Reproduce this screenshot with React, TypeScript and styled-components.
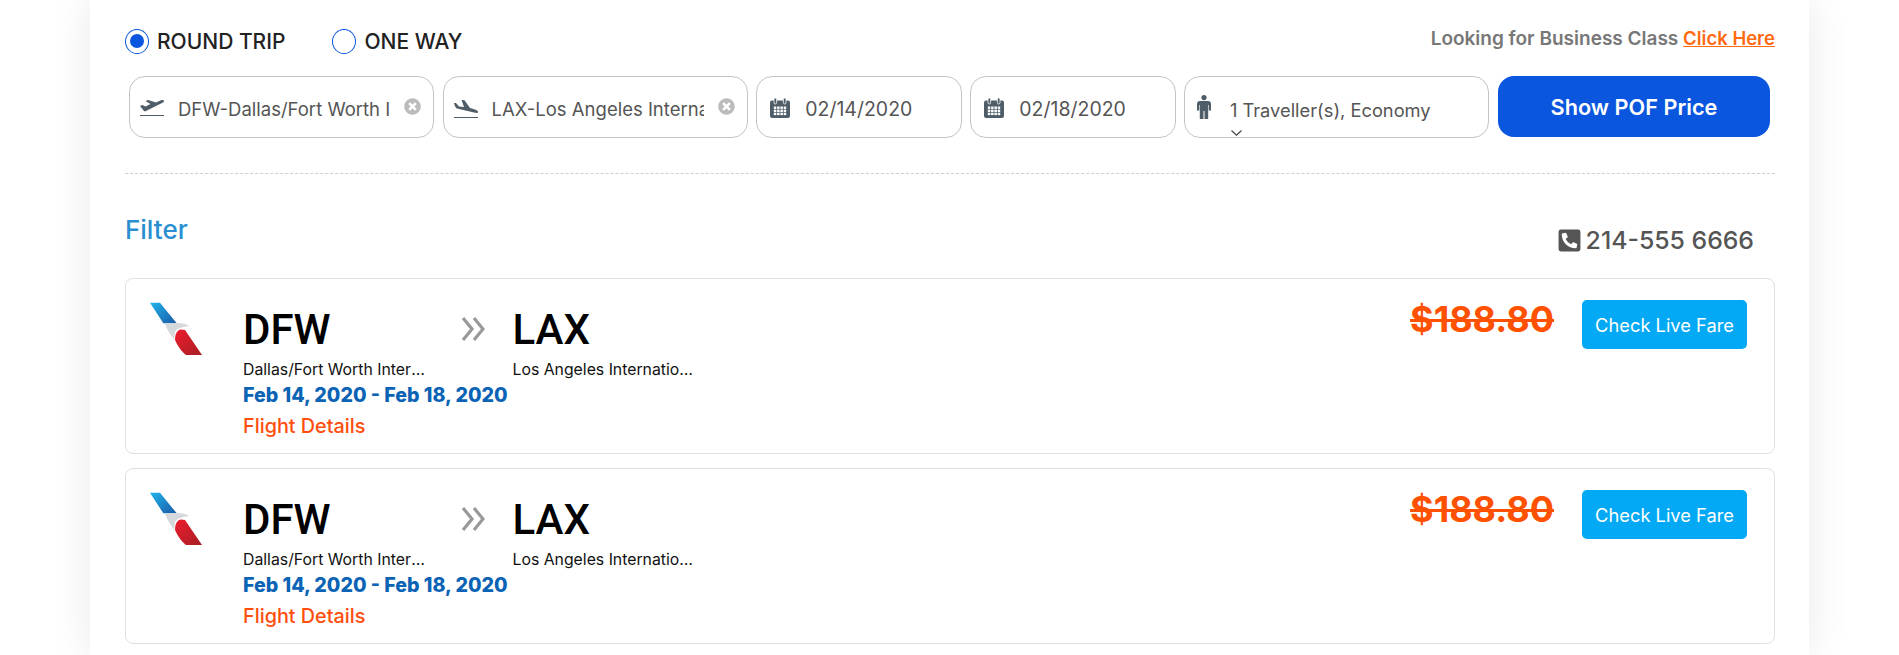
import React from 'react';
import styled, { createGlobalStyle } from 'styled-components';
import { FaPhoneSquareAlt, FaTimesCircle } from 'react-icons/fa';

const GlobalStyle = createGlobalStyle`
  html, body {
    margin: 0;
    height: 655px;
    overflow: hidden;
    background: #fff;
    font-family: Inter, "Liberation Sans", sans-serif;
  }
`;

const Panel = styled.div`
  width: 1719px;
  height: 655px;
  box-sizing: border-box;
  margin-left: 90px;
  padding: 0 34px 0 35px;
  background: #fff;
  box-shadow: 0 0 40px rgba(0, 0, 0, 0.09);
`;

const TopRow = styled.div`
  display: flex;
  align-items: center;
  justify-content: space-between;
  height: 76px;
  padding-top: 6px;
  box-sizing: border-box;
`;

const TripTypes = styled.div`
  display: flex;
  gap: 47px;
`;

const TripType = styled.label`
  display: flex;
  align-items: center;
  gap: 8px;
  font-size: 21px;
  font-weight: 500;
  color: #222;
`;

const Radio = styled.span<{ $checked?: boolean }>`
  width: 24px;
  height: 25px;
  box-sizing: border-box;
  border: 1px solid #0a56de;
  border-radius: 50%;
  display: flex;
  align-items: center;
  justify-content: center;

  &::after {
    content: '';
    display: ${(p) => (p.$checked ? 'block' : 'none')};
    width: 14px;
    height: 14px;
    border-radius: 50%;
    background: #0a56de;
  }
`;

const BusinessNote = styled.div`
  font-size: 19px;
  font-weight: 600;
  color: #777;
  margin-top: -6px;

  a {
    color: #ff6a13;
    text-decoration: underline;
    font-size: 18.5px;
  }
`;

const SearchBar = styled.div`
  display: flex;
  gap: 8.6px;
  margin-left: 4px;
  padding-bottom: 35px;
`;

const Divider = styled.div`
  border-bottom: 1px dashed #cfcfcf;
`;

const Field = styled.div<{ $width: number }>`
  width: ${(p) => p.$width}px;
  height: 62px;
  box-sizing: border-box;
  border: 1px solid #c4c4c4;
  border-radius: 16px;
  background: #fff;
  display: flex;
  align-items: flex-start;
  padding: 20px 0 0 10px;
  color: #4e5d68;
  flex: none;
`;

const FieldText = styled.div<{ $width: number; $gap: number; $size?: number }>`
  width: ${(p) => p.$width}px;
  margin-left: ${(p) => p.$gap}px;
  overflow: hidden;
  white-space: nowrap;
  font-size: ${(p) => p.$size ?? 18.5}px;
  line-height: 24px;
  color: #555;
`;

const Clear = styled.span`
  margin-left: 14px;
  color: #bbb;
  display: flex;
  font-size: 17px;
  margin-top: 1px;
`;

const PlaneIcon = styled.svg`
  width: 24px;
  height: 18px;
  flex: none;
  margin-top: 3px;
  fill: currentColor;
`;

const CalendarIcon = styled.svg`
  width: 20px;
  height: 20px;
  flex: none;
  margin: 1px 0 0 3px;
`;

const PersonIcon = styled.svg`
  width: 14px;
  height: 24px;
  flex: none;
  margin: -2px 0 0 1.5px;
  fill: currentColor;
`;

const TravellerField = styled(Field)`
  overflow: hidden;
`;

const TravellerText = styled.div`
  margin-left: 19px;
  margin-top: 1px;
  font-size: 18.3px;
  line-height: 24px;
  color: #555;
  white-space: nowrap;
`;

const Caret = styled.svg`
  display: block;
  width: 11px;
  height: 6px;
  margin: 8px 0 0 1px;
  fill: none;
  stroke: #444;
  stroke-width: 1.2;
`;

const SearchButton = styled.button`
  width: 272px;
  height: 61px;
  flex: none;
  border: 0;
  border-radius: 16px;
  background: #0a56de;
  color: #fff;
  font-family: inherit;
  font-size: 21.7px;
  font-weight: 600;
`;

const FilterRow = styled.div`
  display: flex;
  justify-content: space-between;
  height: 104px;
  box-sizing: border-box;
  padding: 41px 21px 0 0;
`;

const FilterTitle = styled.div`
  font-size: 26px;
  font-weight: 500;
  line-height: 30px;
  color: #2a8fd0;
`;

const Phone = styled.div`
  display: flex;
  align-items: center;
  gap: 4px;
  margin-top: 13px;
  height: 24px;
  font-size: 24.8px;
  font-weight: 500;
  color: #555;
`;

const FlightCard = styled.div`
  height: 176px;
  box-sizing: border-box;
  margin-bottom: 14px;
  border: 1px solid #e0e0e0;
  border-radius: 8px;
  display: flex;
  padding: 21px 27px 0 24px;
`;

const Logo = styled.svg`
  width: 54px;
  height: 54px;
  flex: none;
  margin: 2px 39px 0 0;
`;

const Route = styled.div`
  display: flex;
  flex-direction: column;
`;

const Stops = styled.div`
  display: flex;
`;

const Stop = styled.div<{ $width: number }>`
  width: ${(p) => p.$width}px;
`;

const Code = styled.div`
  font-family: Roboto, sans-serif;
  font-size: 42px;
  font-weight: 500;
  line-height: 48px;
  margin-top: 6px;
  color: #000;
`;

const AirportName = styled.div`
  width: 183px;
  margin-top: 5px;
  font-size: 15.8px;
  line-height: 22px;
  color: #111;
  white-space: nowrap;
  overflow: hidden;
  text-overflow: ellipsis;
`;

const Arrow = styled.svg`
  width: 24px;
  height: 24px;
  flex: none;
  margin: 17px 28px 0 0;
  color: #999;
`;

const Dates = styled.div`
  margin-top: 2px;
  font-size: 19.6px;
  font-weight: 800;
  line-height: 24px;
  color: #0a63b5;
`;

const DetailsLink = styled.a`
  margin-top: 7px;
  font-size: 19.8px;
  font-weight: 500;
  line-height: 24px;
  color: #ff4e0d;
`;

const Fare = styled.div`
  margin-left: auto;
  display: flex;
  gap: 28px;
`;

const Price = styled.div`
  font-size: 36px;
  font-weight: 700;
  line-height: 40px;
  color: #ff5100;
  text-decoration: line-through;
  margin-top: -1px;
`;

const LiveFareButton = styled.button`
  width: 165px;
  height: 49px;
  border: 0;
  border-radius: 5px;
  background: #03a9f4;
  color: #fff;
  font-family: inherit;
  font-size: 18.3px;
`;

const flights = [1, 2];
const calendarCols = [3.8, 7.1, 10.4, 13.7];
const calendarRows = [8.5, 11.6, 14.7];

function TailLogo() {
  return (
    <Logo viewBox="0 0 54 54">
      <defs>
        <linearGradient id="tailBlue" x1="0" y1="0" x2="1" y2="1">
          <stop offset="0" stopColor="#1fb4ea" />
          <stop offset="1" stopColor="#1c5aa8" />
        </linearGradient>
        <linearGradient id="tailRed" x1="0" y1="0" x2="1" y2="1">
          <stop offset="0" stopColor="#ee1c2e" />
          <stop offset="1" stopColor="#a81e24" />
        </linearGradient>
      </defs>
      <path d="M0 0.7H10L26.7 21.3H13.3Z" fill="url(#tailBlue)" />
      <path d="M15 22C24 21 33 20 39 24C33 25 27 26 25 30L24 38C21 33 17 28 15 22Z" fill="#d6d9dc" />
      <path d="M25 38C25 32 27 28 31 27.5L35 28L52 53H36C33 51 28 45 25 38Z" fill="url(#tailRed)" />
    </Logo>
  );
}

function DoubleArrow() {
  return (
    <Arrow viewBox="0 0 24 24" fill="none" stroke="currentColor" strokeWidth="3.2">
      <polyline points="2,1 11,12 2,23" />
      <polyline points="13,1 22,12 13,23" />
    </Arrow>
  );
}

function Takeoff() {
  return (
    <PlaneIcon viewBox="0 0 24 18">
      <path d="M0 6L2.5 5L5.5 6.5L10.5 4L5.5 1L8 0L16 2.5L20.5 0.5C22.1 -0.2 23.5 -0.1 24 0.7C24.3 1.5 23.5 2.3 22 3.1L6 11C5.2 11.3 4.5 11.3 4 11Z" />
      <rect x="0" y="15" width="24" height="1" />
    </PlaneIcon>
  );
}

function Landing() {
  return (
    <PlaneIcon viewBox="0 0 24 18">
      <path d="M0 3L2 3L5 6.5L10 7L7.5 0L10.5 0.3L16 8L21 9.5C23.5 10.3 24.5 11.5 24 12.5C23.5 13.2 22 13 20 12.5L3 8.5C2 8 1 7 0 3Z" />
      <rect x="0" y="17" width="24" height="1" />
    </PlaneIcon>
  );
}

function Calendar() {
  return (
    <CalendarIcon viewBox="0 0 20 20">
      <rect x="0" y="2.5" width="20" height="17.5" rx="2" fill="currentColor" />
      <rect x="4" y="0" width="2.6" height="6" rx="1.3" fill="currentColor" stroke="#fff" strokeWidth="0.8" />
      <rect x="13.4" y="0" width="2.6" height="6" rx="1.3" fill="currentColor" stroke="#fff" strokeWidth="0.8" />
      {calendarRows.map((y) =>
        calendarCols.map((x) => <rect key={`${x}-${y}`} x={x} y={y} width="2.5" height="2.4" fill="#fff" />)
      )}
    </CalendarIcon>
  );
}

function Person() {
  return (
    <PersonIcon viewBox="0 0 14 24">
      <circle cx="7" cy="2.6" r="2.6" />
      <path d="M3 6H11A3 3 0 0 1 14 9V15.5H11.8V10H11.2V24H7.5V16H6.5V24H2.8V10H2.2V15.5H0V9A3 3 0 0 1 3 6Z" />
    </PersonIcon>
  );
}

export default function App() {
  return (
    <>
      <GlobalStyle />
      <Panel>
        <TopRow>
          <TripTypes>
            <TripType>
              <Radio $checked />
              ROUND TRIP
            </TripType>
            <TripType>
              <Radio />
              ONE WAY
            </TripType>
          </TripTypes>
          <BusinessNote>
            Looking for Business Class <a href="#business">Click Here</a>
          </BusinessNote>
        </TopRow>
        <SearchBar>
          <Field $width={305}>
            <Takeoff />
            <FieldText $width={212} $gap={14}>DFW-Dallas/Fort Worth International Airport</FieldText>
            <Clear><FaTimesCircle /></Clear>
          </Field>
          <Field $width={305}>
            <Landing />
            <FieldText $width={212} $gap={14}>LAX-Los Angeles International Airport</FieldText>
            <Clear><FaTimesCircle /></Clear>
          </Field>
          <Field $width={205.5}>
            <Calendar />
            <FieldText $width={130} $gap={15} $size={19.5}>02/14/2020</FieldText>
          </Field>
          <Field $width={205.5}>
            <Calendar />
            <FieldText $width={130} $gap={15} $size={19.5}>02/18/2020</FieldText>
          </Field>
          <TravellerField $width={305}>
            <Person />
            <TravellerText>
              1 Traveller(s), Economy
              <Caret viewBox="0 0 11 6">
                <polyline points="0.5,0.5 5.5,5.2 10.5,0.5" />
              </Caret>
            </TravellerText>
          </TravellerField>
          <SearchButton>Show POF Price</SearchButton>
        </SearchBar>
        <Divider />
        <FilterRow>
          <FilterTitle>Filter</FilterTitle>
          <Phone>
            <FaPhoneSquareAlt size={25} />
            214-555 6666
          </Phone>
        </FilterRow>
        {flights.map((id) => (
          <FlightCard key={id}>
            <TailLogo />
            <Route>
              <Stops>
                <Stop $width={217.5}>
                  <Code>DFW</Code>
                  <AirportName>Dallas/Fort Worth International Airport</AirportName>
                </Stop>
                <DoubleArrow />
                <Stop $width={200}>
                  <Code>LAX</Code>
                  <AirportName>Los Angeles International Airport</AirportName>
                </Stop>
              </Stops>
              <Dates>Feb 14, 2020 - Feb 18, 2020</Dates>
              <DetailsLink>Flight Details</DetailsLink>
            </Route>
            <Fare>
              <Price>$188.80</Price>
              <LiveFareButton>Check Live Fare</LiveFareButton>
            </Fare>
          </FlightCard>
        ))}
      </Panel>
    </>
  );
}
